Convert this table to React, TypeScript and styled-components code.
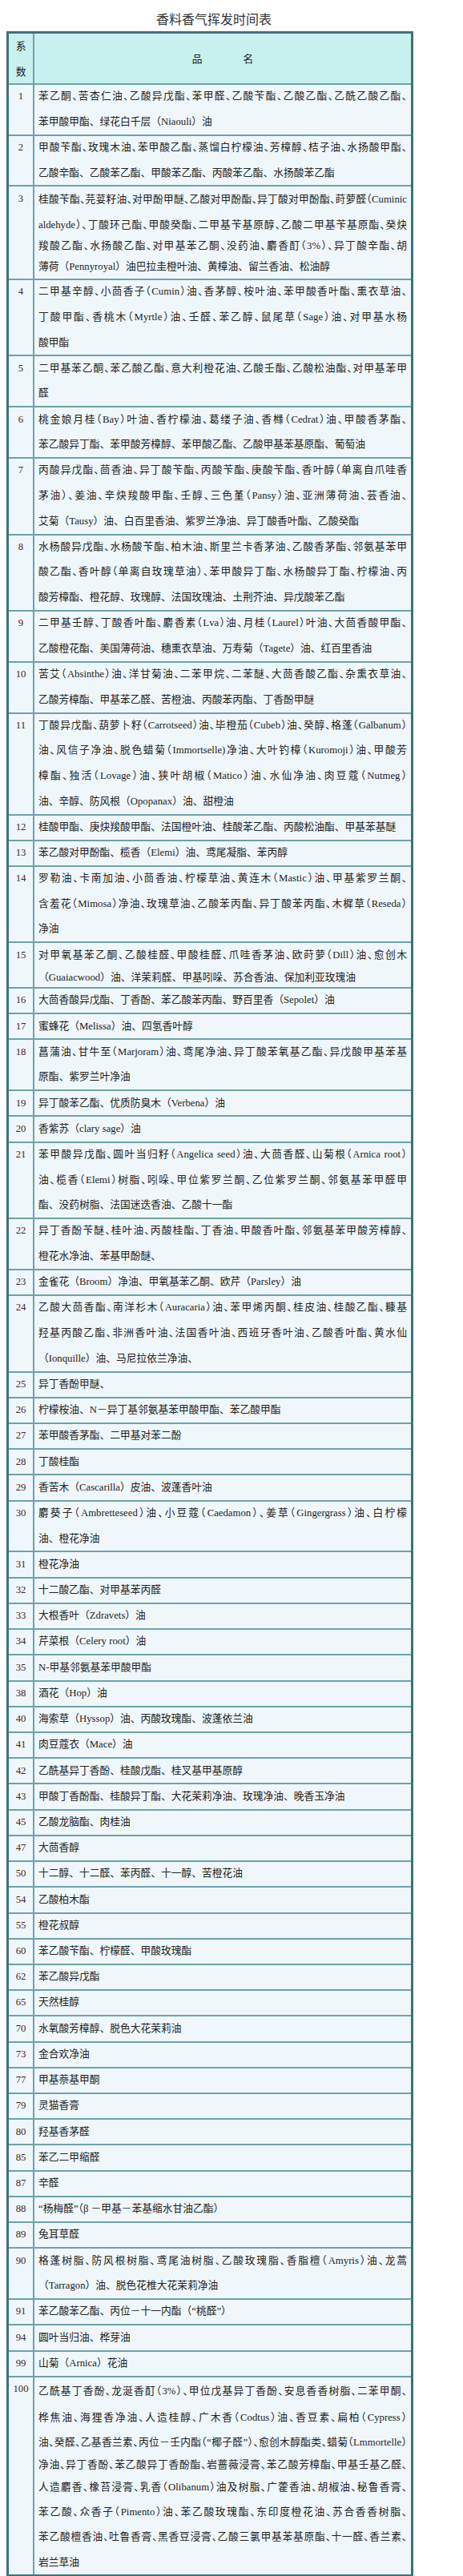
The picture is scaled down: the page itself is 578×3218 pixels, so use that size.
import React from 'react';
import styled, { createGlobalStyle, css } from 'styled-components';

// a line is plain text, or text with its own line box height (the source has uneven spacing)
type Line = string | { t: string; h: number };
type Row = { n: string; lines: Line[] };

const rows: Row[] = [
    {
        n: '1',
        lines: [
            '苯乙酮、苦杏仁油、乙酸异戊酯、苯甲醛、乙酸苄酯、乙酸乙酯、乙酰乙酸乙酯、',
            '苯甲酸甲酯、绿花白千层（Niaouli）油',
        ],
    },
    {
        n: '2',
        lines: [
            '甲酸苄酯、玫瑰木油、苯甲酸乙酯、蒸馏白柠檬油、芳樟醇、桔子油、水扬酸甲酯、',
            '乙酸辛酯、乙酸苯乙酯、甲酸苯乙酯、丙酸苯乙酯、水扬酸苯乙酯',
        ],
    },
    {
        n: '3',
        lines: [
            { t: '桂酸苄酯、芫荽籽油、对甲酚甲醚、乙酸对甲酚酯、异丁酸对甲酚酯、莳萝醛（Cuminic', h: 33 },
            { t: 'aldehyde）、丁酸环己酯、甲酸癸酯、二甲基苄基原醇、乙酸二甲基苄基原酯、癸炔', h: 31 },
            { t: '羧酸乙酯、水扬酸乙酯、对甲基苯乙酮、没药油、麝香酊（3%）、异丁酸辛酯、胡', h: 21 },
            { t: '薄荷（Pennyroyal）油巴拉圭橙叶油、黄樟油、留兰香油、松油醇', h: 31 },
        ],
    },
    {
        n: '4',
        lines: [
            '二甲基辛醇、小茴香子（Cumin）油、香茅醇、桉叶油、苯甲酸香叶酯、熏衣草油、',
            '丁酸甲酯、香桃木（Myrtle）油、壬醛、苯乙醇、鼠尾草（Sage）油、对甲基水杨',
            '酸甲酯',
        ],
    },
    {
        n: '5',
        lines: ['二甲基苯乙酮、苯乙酸乙酯、意大利橙花油、乙酸壬酯、乙酸松油酯、对甲基苯甲', '醛'],
    },
    {
        n: '6',
        lines: [
            '桃金娘月桂（Bay）叶油、香柠檬油、葛缕子油、香橼（Cedrat）油、甲酸香茅酯、',
            '苯乙酸异丁酯、苯甲酸芳樟醇、苯甲酸乙酯、乙酸甲基苯基原酯、葡萄油',
        ],
    },
    {
        n: '7',
        lines: [
            '丙酸异戊酯、茴香油、异丁酸苄酯、丙酸苄酯、庚酸苄酯、香叶醇（单离自爪哇香',
            '茅油）、姜油、辛炔羧酸甲酯、壬醇、三色堇（Pansy）油、亚洲薄荷油、芸香油、',
            '艾菊（Tausy）油、白百里香油、紫罗兰净油、异丁酸香叶酯、乙酸癸酯',
        ],
    },
    {
        n: '8',
        lines: [
            '水杨酸异戊酯、水杨酸苄酯、柏木油、斯里兰卡香茅油、乙酸香茅酯、邻氨基苯甲',
            '酸乙酯、香叶醇（单离自玫瑰草油）、苯甲酸异丁酯、水杨酸异丁酯、柠檬油、丙',
            '酸芳樟酯、橙花醇、玫瑰醇、法国玫瑰油、土荆芥油、异戊酸苯乙酯',
        ],
    },
    {
        n: '9',
        lines: [
            '二甲基壬醇、丁酸香叶酯、麝香素（Lva）油、月桂（Laurel）叶油、大茴香酸甲酯、',
            '乙酸橙花酯、美国薄荷油、穗熏衣草油、万寿菊（Tagete）油、红百里香油',
        ],
    },
    {
        n: '10',
        lines: [
            '苦艾（Absinthe）油、洋甘菊油、二苯甲烷、二苯醚、大茴香酸乙酯、杂熏衣草油、',
            '乙酸芳樟酯、甲基苯乙醛、苦橙油、丙酸苯丙酯、丁香酚甲醚',
        ],
    },
    {
        n: '11',
        lines: [
            '丁酸异戊酯、葫萝卜籽（Carrotseed）油、毕橙茄（Cubeb）油、癸醇、格蓬（Galbanum）',
            '油、风信子净油、脱色蜡菊（Immortselle)净油、大叶钓樟（Kuromoji）油、甲酸芳',
            '樟酯、独活（Lovage）油、狭叶胡椒（Matico）油、水仙净油、肉豆蔻（Nutmeg）',
            '油、辛醇、防风根（Opopanax）油、甜橙油',
        ],
    },
    { n: '12', lines: ['桂酸甲酯、庚炔羧酸甲酯、法国橙叶油、桂酸苯乙酯、丙酸松油酯、甲基苯基醚'] },
    { n: '13', lines: ['苯乙酸对甲酚酯、榄香（Elemi）油、鸢尾凝脂、苯丙醇'] },
    {
        n: '14',
        lines: [
            '罗勒油、卡南加油、小茴香油、柠檬草油、黄连木（Mastic）油、甲基紫罗兰酮、',
            '含羞花（Mimosa）净油、玫瑰草油、乙酸苯丙酯、异丁酸苯丙酯、木樨草（Reseda）',
            '净油',
        ],
    },
    {
        n: '15',
        lines: [
            { t: '对甲氧基苯乙酮、乙酸桂醛、甲酸桂醛、爪哇香茅油、欧莳萝（Dill）油、愈创木', h: 31 },
            { t: '（Guaiacwood）油、洋茉莉醛、甲基吲哚、苏合香油、保加利亚玫瑰油', h: 25 },
        ],
    },
    { n: '16', lines: ['大茴香酸异戊酯、丁香酚、苯乙酸苯丙酯、野百里香（Sepolet）油'] },
    { n: '17', lines: ['蜜蜂花（Melissa）油、四氢香叶醇'] },
    {
        n: '18',
        lines: ['菖蒲油、甘牛至（Marjoram）油、鸢尾净油、异丁酸苯氧基乙酯、异戊酸甲基苯基', '原酯、紫罗兰叶净油'],
    },
    { n: '19', lines: ['异丁酸苯乙酯、优质防臭木（Verbena）油'] },
    { n: '20', lines: ['香紫苏（clary sage）油'] },
    {
        n: '21',
        lines: [
            '苯甲酸异戊酯、圆叶当归籽（Angelica seed）油、大茴香醛、山菊根（Arnica root）',
            '油、榄香（Elemi）树脂、吲哚、甲位紫罗兰酮、乙位紫罗兰酮、邻氨基苯甲醛甲',
            '酯、没药树脂、法国迷迭香油、乙酸十一酯',
        ],
    },
    {
        n: '22',
        lines: ['异丁香酚苄醚、桂叶油、丙酸桂酯、丁香油、甲酸香叶酯、邻氨基苯甲酸芳樟醇、', '橙花水净油、苯基甲酚醚、'],
    },
    { n: '23', lines: ['金雀花（Broom）净油、甲氧基苯乙酮、欧芹（Parsley）油'] },
    {
        n: '24',
        lines: [
            '乙酸大茴香酯、南洋杉木（Auracaria）油、苯甲烯丙酮、桂皮油、桂酸乙酯、糠基',
            '羟基丙酸乙酯、非洲香叶油、法国香叶油、西班牙香叶油、乙酸香叶酯、黄水仙',
            '（Ionquille）油、马尼拉依兰净油、',
        ],
    },
    { n: '25', lines: ['异丁香酚甲醚、'] },
    { n: '26', lines: ['柠檬桉油、N－异丁基邻氨基苯甲酸甲酯、苯乙酸甲酯'] },
    { n: '27', lines: ['苯甲酸香茅酯、二甲基对苯二酚'] },
    { n: '28', lines: ['丁酸桂酯'] },
    { n: '29', lines: ['香苦木（Cascarilla）皮油、波蓬香叶油'] },
    {
        n: '30',
        lines: ['麝葵子（Ambretteseed）油、小豆蔻（Caedamon）、姜草（Gingergrass）油、白柠檬', '油、橙花净油'],
    },
    { n: '31', lines: ['橙花净油'] },
    { n: '32', lines: ['十二酸乙酯、对甲基苯丙醛'] },
    { n: '33', lines: ['大根香叶（Zdravets）油'] },
    { n: '34', lines: ['芹菜根（Celery root）油'] },
    { n: '35', lines: ['N-甲基邻氨基苯甲酸甲酯'] },
    { n: '38', lines: ['酒花（Hop）油'] },
    { n: '40', lines: ['海索草（Hyssop）油、丙酸玫瑰酯、波蓬依兰油'] },
    { n: '41', lines: ['肉豆蔻衣（Mace）油'] },
    { n: '42', lines: ['乙酰基异丁香酚、桂酸戊酯、桂叉基甲基原醇'] },
    { n: '43', lines: ['甲酸丁香酚酯、桂酸异丁酯、大花茉莉净油、玫瑰净油、晚香玉净油'] },
    { n: '45', lines: ['乙酸龙脑酯、肉桂油'] },
    { n: '47', lines: ['大茴香醇'] },
    { n: '50', lines: ['十二醇、十二醛、苯丙醛、十一醇、苦橙花油'] },
    { n: '54', lines: ['乙酸柏木酯'] },
    { n: '55', lines: ['橙花叔醇'] },
    { n: '60', lines: ['苯乙酸苄酯、柠檬醛、甲酸玫瑰酯'] },
    { n: '62', lines: ['苯乙酸异戊酯'] },
    { n: '65', lines: ['天然桂醇'] },
    { n: '70', lines: ['水氧酸芳樟醇、脱色大花茉莉油'] },
    { n: '73', lines: ['金合欢净油'] },
    { n: '77', lines: ['甲基萘基甲酮'] },
    { n: '79', lines: ['灵猫香膏'] },
    { n: '80', lines: ['羟基香茅醛'] },
    { n: '85', lines: ['苯乙二甲缩醛'] },
    { n: '87', lines: ['辛醛'] },
    { n: '88', lines: ['“杨梅醛”（β －甲基－苯基缩水甘油乙酯）'] },
    { n: '89', lines: ['兔耳草醛'] },
    {
        n: '90',
        lines: ['格蓬树脂、防风根树脂、鸢尾油树脂、乙酸玫瑰脂、香脂檀（Amyris）油、龙蒿', '（Tarragon）油、脱色花椎大花茉莉净油'],
    },
    { n: '91', lines: ['苯乙酸苯乙酯、丙位－十一内酯（“桃醛”）'] },
    { n: '94', lines: ['圆叶当归油、桦芽油'] },
    { n: '99', lines: ['山菊（Arnica）花油'] },
    {
        n: '100',
        lines: [
            { t: '乙酰基丁香酚、龙涎香酊（3%）、甲位戊基异丁香酚、安息香香树脂、二苯甲酮、', h: 36 },
            { t: '桦焦油、海狸香净油、人造桂醇、广木香（Codtus）油、香豆素、扁柏（Cypress）', h: 31 },
            { t: '油、癸醛、乙基香兰素、丙位－壬内酯（“椰子醛”）、愈创木醇酯类、蜡菊（Lmmortelle）', h: 31 },
            { t: '净油、异丁香酚、苯乙酸异丁香酚酯、岩蔷薇浸膏、苯乙酸芳樟酯、甲基壬基乙醛、', h: 25 },
            { t: '人造麝香、橡苔浸膏、乳香（Olibanum）油及树脂、广藿香油、胡椒油、秘鲁香膏、', h: 31 },
            { t: '苯乙酸、众香子（Pimento）油、苯乙酸玫瑰酯、东印度橙花油、苏合香香树脂、', h: 30 },
            { t: '苯乙酸檀香油、吐鲁香膏、黑香豆浸膏、乙酸三氯甲基苯基原酯、十一醛、香兰素、', h: 32 },
            { t: '岩兰草油', h: 32 },
        ],
    },
];

const LINE = 31.6;

const GlobalStyle = createGlobalStyle`
    body {
        margin: 8px;
        background: #ffffff;
        color: #222222;
        font-family: "Liberation Serif", "Noto Sans CJK SC", serif;
    }
`;

const Styled = {
    Page: styled.div`
        width: 508px;
    `,
    Title: styled.h1`
        margin: 0;
        padding-left: 10px;
        font-family: "Noto Sans CJK SC", sans-serif;
        font-size: 16px;
        font-weight: 400;
        line-height: 31px;
        text-align: center;
        color: #333333;
    `,
    Table: styled.table`
        width: 508px;
        table-layout: fixed;
        border-collapse: collapse;
        border: 3px solid #3e717b;
        font-size: 12.75px;
    `,
    Head: styled.th<{ $narrow?: boolean }>`
        width: ${(p) => (p.$narrow ? '30px' : 'auto')};
        padding: 0;
        background: #c8f0ee;
        border: 2px solid #6ea2a9;
        font-family: "Noto Sans CJK SC", sans-serif;
        font-weight: 400;
        line-height: ${LINE}px;
        text-align: center;
        vertical-align: middle;
        color: #222222;
    `,
    Num: styled.td`
        padding: 0;
        background: #eff7fb;
        border: 2px solid #6ea2a9;
        text-align: center;
        vertical-align: top;
        line-height: ${LINE}px;
        color: #4a2626;
    `,
    Names: styled.td`
        padding: 0 5px;
        background: #eff7fb;
        border: 2px solid #6ea2a9;
        vertical-align: top;
    `,
    Inner: styled.div`
        margin: -0.7px 0;
    `,
    // full lines are justified edge to edge with half-width punctuation, as the source compresses it
    Line: styled.div<{ $last: boolean; $h?: number }>`
        line-height: ${(p) => p.$h ?? LINE}px;
        text-align: left;
        ${(p) =>
            !p.$last &&
            css`
                text-align: justify;
                text-align-last: justify;
                font-feature-settings: "halt";
            `}
    `,
};

const App = () => {
    return (
        <Styled.Page>
            <GlobalStyle />
            <Styled.Title>香料香气挥发时间表</Styled.Title>
            <Styled.Table>
                <thead>
                    <tr>
                        <Styled.Head $narrow>
                            <Styled.Inner>
                                系<br />数
                            </Styled.Inner>
                        </Styled.Head>
                        <Styled.Head>品　　　　名</Styled.Head>
                    </tr>
                </thead>
                <tbody>
                    {rows.map((row) => (
                        <tr key={row.n}>
                            <Styled.Num>
                                <Styled.Inner>{row.n}</Styled.Inner>
                            </Styled.Num>
                            <Styled.Names>
                                <Styled.Inner>
                                    {row.lines.map((line, i) => {
                                        const l = typeof line === 'string' ? { t: line, h: undefined } : line;
                                        return (
                                            <Styled.Line key={i} $last={i === row.lines.length - 1} $h={l.h}>
                                                {l.t}
                                            </Styled.Line>
                                        );
                                    })}
                                </Styled.Inner>
                            </Styled.Names>
                        </tr>
                    ))}
                </tbody>
            </Styled.Table>
        </Styled.Page>
    );
};

export default App;
